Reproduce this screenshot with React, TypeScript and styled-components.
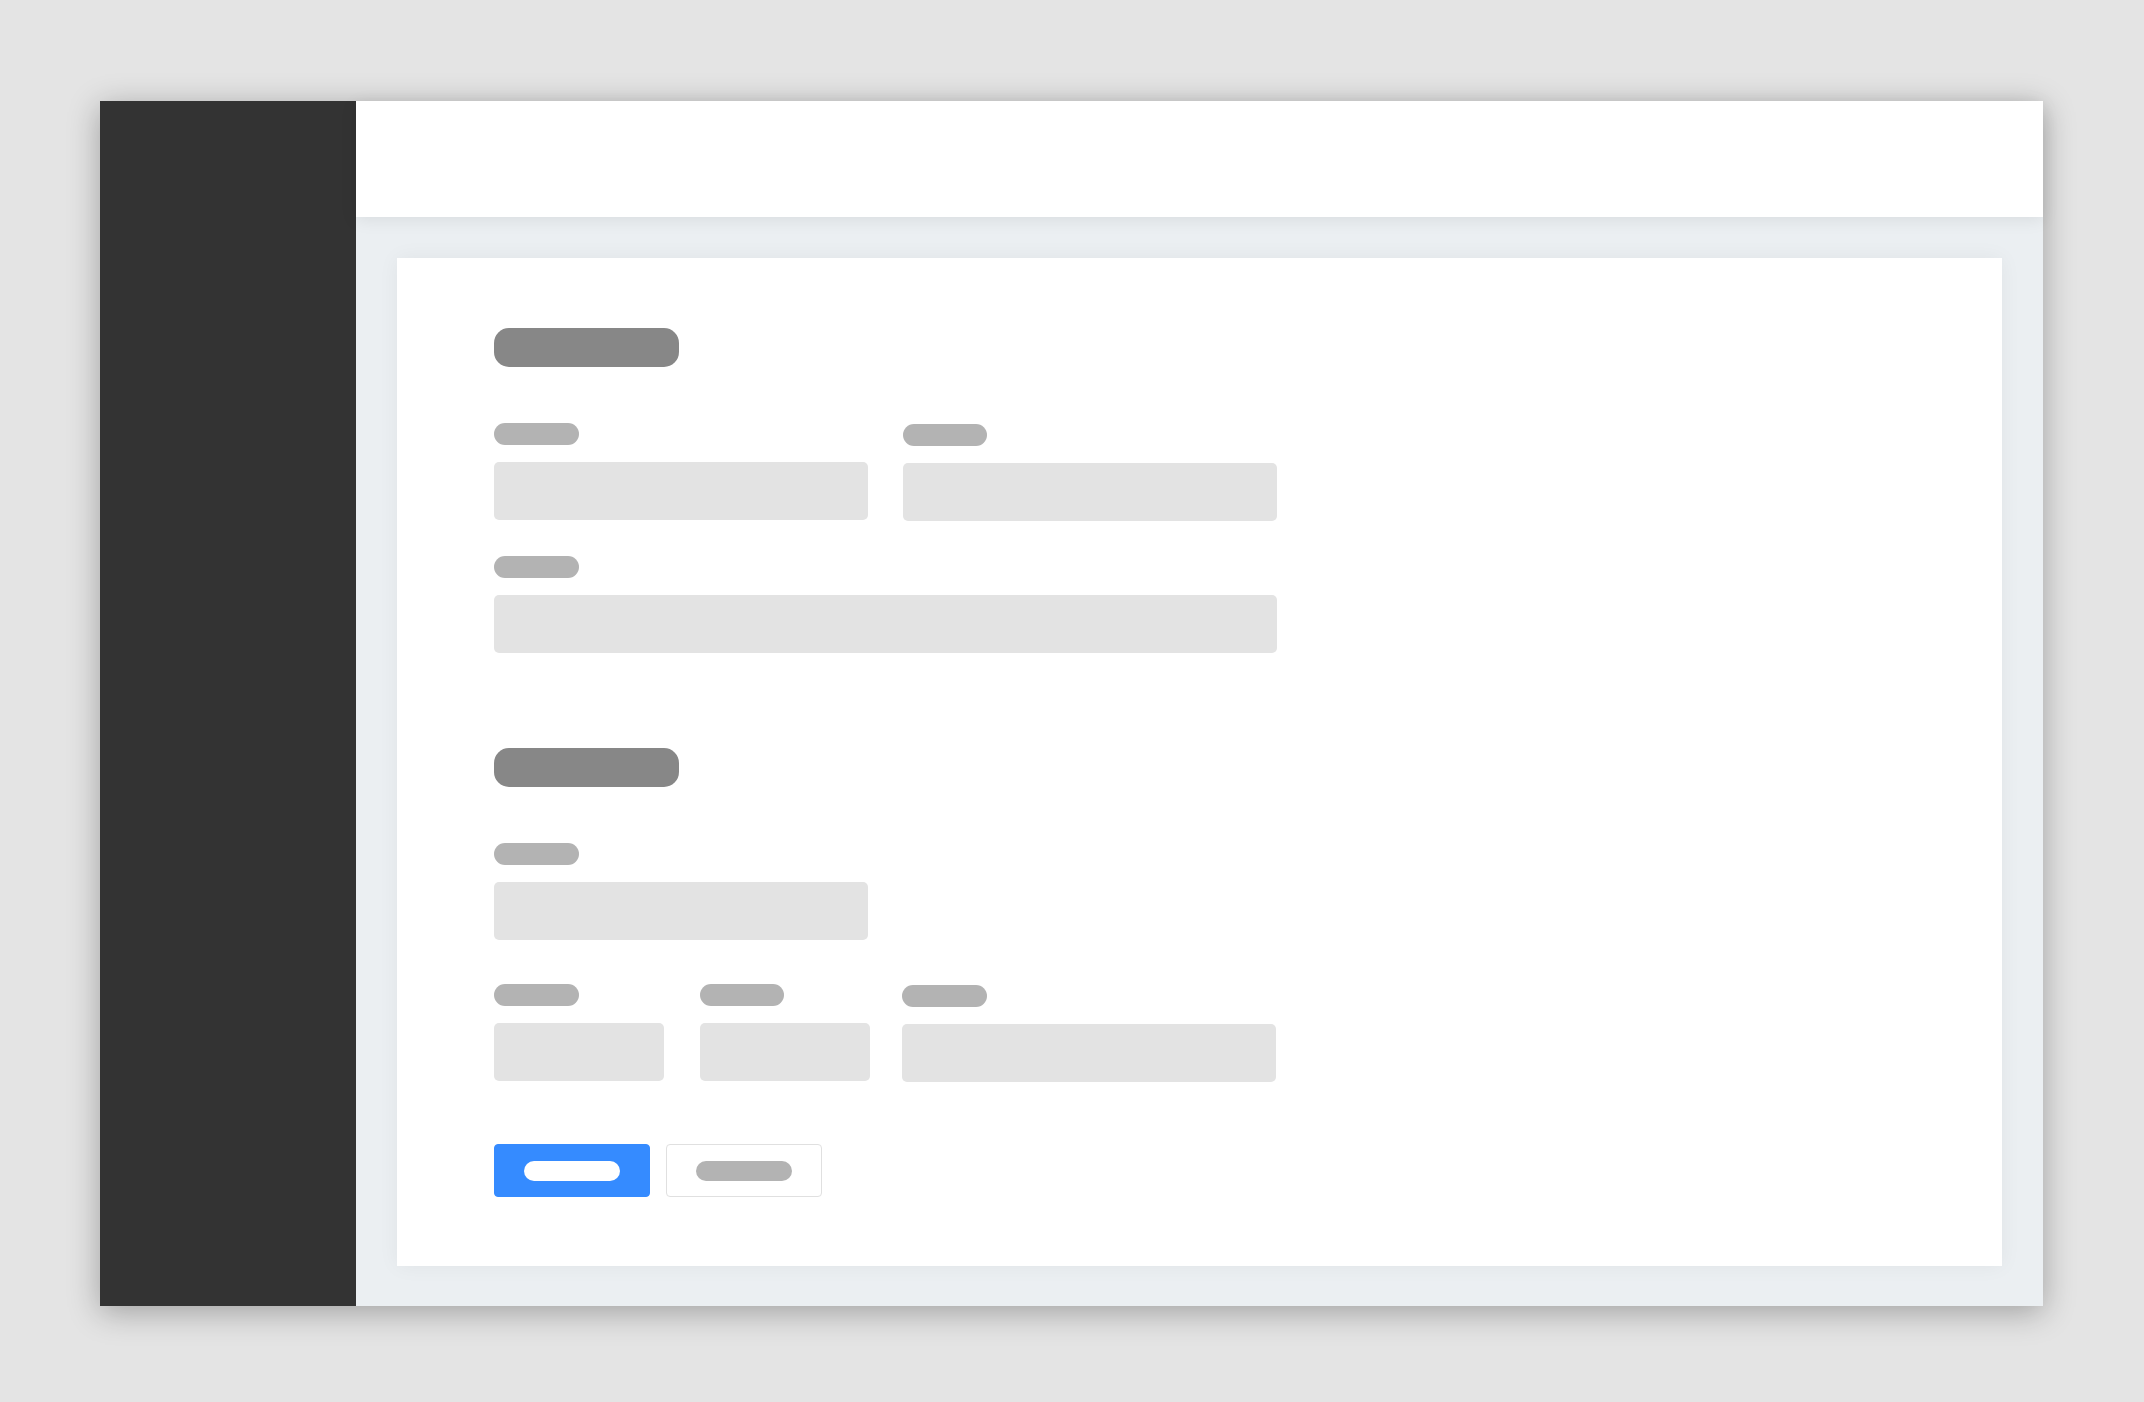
import React from "react";
import styled, { createGlobalStyle } from "styled-components";

const GlobalStyle = createGlobalStyle`
  html, body {
    margin: 0;
    padding: 0;
    background: #e4e4e4;
    font-family: "Liberation Sans", Arial, sans-serif;
  }
  #root { min-height: 100vh; }
`;

const Page = styled.div`
  width: 2144px;
  height: 1402px;
  box-sizing: border-box;
  padding: 101px 0 0 100px;
  background: #e4e4e4;
  overflow: hidden;
`;

const Frame = styled.div`
  width: 1943px;
  height: 1205px;
  display: flex;
  background: #ebeff2;
  box-shadow: 0 6px 30px rgba(0, 0, 0, 0.3);
`;

const Sidebar = styled.aside`
  width: 256px;
  flex-shrink: 0;
  background: #333333;
`;

const Main = styled.div`
  flex: 1;
  display: flex;
  flex-direction: column;
  min-width: 0;
`;

const Header = styled.header`
  height: 116px;
  flex-shrink: 0;
  background: #ffffff;
  position: relative;
  z-index: 1;
  box-shadow: 0 3px 16px rgba(0, 0, 0, 0.08);
`;

const Content = styled.main`
  flex: 1;
  display: flex;
  padding: 41px 41px 40px 41px;
  background: #ebeff2;
`;

const Card = styled.section`
  flex: 1;
  background: #ffffff;
  box-shadow: 0 0 20px rgba(0, 0, 0, 0.05);
  padding: 70px 0 0 97px;
  display: flex;
  flex-direction: column;
`;

const Section = styled.div<{ $gapAfter?: number }>`
  display: flex;
  flex-direction: column;
  width: 783px;
  margin-bottom: ${(p) => p.$gapAfter ?? 0}px;
`;

const Title = styled.div`
  width: 185px;
  height: 39px;
  border-radius: 15px;
  background: #878787;
  margin-bottom: 56px;
`;

const Row = styled.div<{ $cols: string; $gapAfter?: number }>`
  display: grid;
  grid-template-columns: ${(p) => p.$cols};
  margin-bottom: ${(p) => p.$gapAfter ?? 0}px;
`;

const Field = styled.div<{ $shift?: number }>`
  display: flex;
  flex-direction: column;
  gap: 17px;
  margin-top: ${(p) => p.$shift ?? 0}px;
`;

const Label = styled.div<{ $w?: number }>`
  width: ${(p) => p.$w ?? 85}px;
  height: 22px;
  border-radius: 11px;
  background: #b3b3b3;
`;

const Input = styled.div`
  height: 58px;
  border-radius: 5px;
  background: #e3e3e3;
`;

const Actions = styled.div`
  display: flex;
  gap: 16px;
`;

const Button = styled.div<{ $primary?: boolean }>`
  width: 156px;
  height: 53px;
  box-sizing: border-box;
  border-radius: 4px;
  display: flex;
  align-items: center;
  justify-content: center;
  background: ${(p) => (p.$primary ? "#358bff" : "#ffffff")};
  border: 1px solid ${(p) => (p.$primary ? "#358bff" : "#e0e0e0")};
`;

const ButtonText = styled.div<{ $primary?: boolean }>`
  width: 96px;
  height: 20px;
  border-radius: 10px;
  background: ${(p) => (p.$primary ? "#ffffff" : "#b3b3b3")};
`;

export default function App() {
  return (
    <>
      <GlobalStyle />
      <Page>
        <Frame>
          <Sidebar />
          <Main>
            <Header />
            <Content>
              <Card>
                <Section $gapAfter={95}>
                  <Title />
                  <Row $cols="374px 35px 374px" $gapAfter={35}>
                    <Field>
                      <Label />
                      <Input />
                    </Field>
                    <div />
                    <Field $shift={1}>
                      <Label $w={84} />
                      <Input />
                    </Field>
                  </Row>
                  <Row $cols="783px">
                    <Field>
                      <Label />
                      <Input />
                    </Field>
                  </Row>
                </Section>
                <Section $gapAfter={62}>
                  <Title />
                  <Row $cols="374px" $gapAfter={44}>
                    <Field>
                      <Label />
                      <Input />
                    </Field>
                  </Row>
                  <Row $cols="170px 36px 170px 32px 374px">
                    <Field>
                      <Label />
                      <Input />
                    </Field>
                    <div />
                    <Field>
                      <Label $w={84} />
                      <Input />
                    </Field>
                    <div />
                    <Field $shift={1}>
                      <Label />
                      <Input />
                    </Field>
                  </Row>
                </Section>
                <Actions>
                  <Button $primary>
                    <ButtonText $primary />
                  </Button>
                  <Button>
                    <ButtonText />
                  </Button>
                </Actions>
              </Card>
            </Content>
          </Main>
        </Frame>
      </Page>
    </>
  );
}
